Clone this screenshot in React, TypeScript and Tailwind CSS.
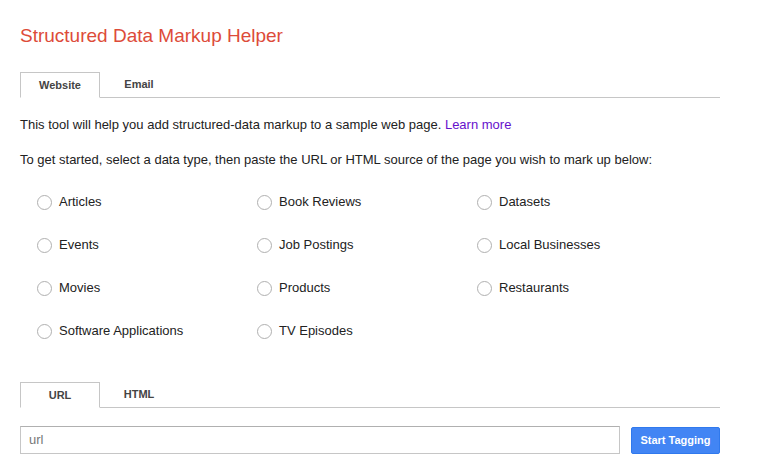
export default function App() {
  const items = ["Articles","Book Reviews","Datasets","Events","Job Postings","Local Businesses","Movies","Products","Restaurants","Software Applications","TV Episodes"];
  return (
    <div className="w-[760px] h-[475px] bg-white text-[13px] text-[#222] px-5" style={{fontFamily:'Arial, "Liberation Sans", sans-serif'}}>
      <h1 className="text-[19px] text-[#dd4b39] pt-[24px] leading-[24px] h-[48px]">Structured Data Markup Helper</h1>
      <div className="mt-[24px] flex w-[700px] border-b border-[#c6c6c6] h-[26px]">
        <div className="w-[80px] border border-[#c6c6c6] border-b-white -mb-px bg-white flex items-center justify-center text-[11px] font-bold text-[#444]">Website</div>
        <div className="w-[78px] flex items-center justify-center text-[11px] font-bold text-[#444]">Email</div>
      </div>
      <p className="mt-[19px] leading-[16px]">This tool will help you add structured-data markup to a sample web page. <span className="text-[#6611cc]">Learn more</span></p>
      <p className="mt-[19px] leading-[16px]">To get started, select a data type, then paste the URL or HTML source of the page you wish to mark up below:</p>
      <div className="grid grid-cols-[220px_220px_220px] ml-[17px] mt-[12px]">
        {items.map(t => (
          <div key={t} className="flex items-center h-[43px]">
            <span className="w-[15px] h-[15px] rounded-full border border-[#b0b0b0] bg-white mr-[7px] mt-[2px]" />
            <span className="leading-[16px]">{t}</span>
          </div>
        ))}
      </div>
      <div className="mt-[30px] flex w-[700px] border-b border-[#c6c6c6] h-[26px]">
        <div className="w-[80px] border border-[#c6c6c6] border-b-white -mb-px bg-white flex items-center justify-center text-[11px] font-bold text-[#444]">URL</div>
        <div className="w-[78px] flex items-center justify-center text-[11px] font-bold text-[#444]">HTML</div>
      </div>
      <div className="mt-[18px] flex items-center">
        <div className="w-[600px] h-[28px] border border-[#c6c6c6] border-t-[#b0b0b0] flex items-center px-[8px] text-[#777]">url</div>
        <div className="ml-[11px] w-[89px] h-[27px] bg-[#4285f4] border border-[#3079ed] rounded-[2px] flex items-center justify-center text-white text-[11px] font-bold">Start Tagging</div>
      </div>
    </div>
  );
}
